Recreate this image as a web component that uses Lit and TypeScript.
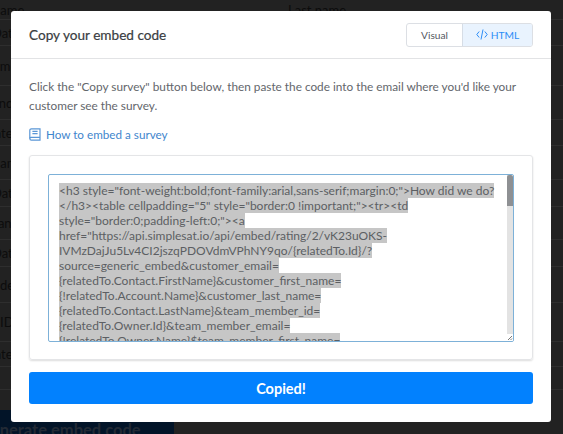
import { LitElement, html, css } from "lit";
import { customElement } from "lit/decorators.js";

const LINES = [
  '<h3 style="font-weight:bold;font-family:arial,sans-serif;margin:0;">How did we do?',
  '</h3><table cellpadding="5" style="border:0 !important;"><tr><td',
  'style="border:0;padding-left:0;"><a',
  'href="https://api.simplesat.io/api/embed/rating/2/vK23uOKS-',
  'IVMzDajJu5Lv4CI2jszqPDOVdmVPhNY9qo/{relatedTo.Id}/?',
  'source=generic_embed&customer_email=',
  '{relatedTo.Contact.FirstName}&customer_first_name=',
  '{!relatedTo.Account.Name}&customer_last_name=',
  '{relatedTo.Contact.LastName}&team_member_id=',
  '{relatedTo.Owner.Id}&team_member_email=',
  '{!relatedTo.Owner.Name}$team_member_first_name=',
];

// label, right-hand label, row height, how far the label starts left of the window
const BG_ROWS: [string, string, number, number][] = [
  ["name", "Last name", 20, 7],
  ["Date", "", 26, 8],
  ["name", "", 40, 14],
  ["Vendor", "", 34, 16],
  ["Date", "", 26, 15],
  ["name", "", 34, 7],
  ["Date", "", 27, 8],
  ["Company", "", 33, 36],
  ["Date", "", 27, 8],
  ["Code", "", 36, 16],
  ["ID", "", 39, 0],
  ["Date", "", 25, 15],
  ["", "", 23, 0],
];

@customElement("app-root")
export class AppRoot extends LitElement {
  static styles = css`
    :host {
      display: block;
      position: relative;
      width: 563px;
      height: 434px;
      overflow: hidden;
      background: #222;
      font-family: Lato, "Open Sans", sans-serif;
    }
    .page {
      display: flex;
      flex-direction: column;
      height: 434px;
    }
    .bg-row {
      display: grid;
      grid-template-columns: 288px 1fr;
      align-items: center;
      box-sizing: border-box;
      border-bottom: 1px solid #2e2e2e;
      font-size: 13px;
      line-height: 16px;
      color: #0c0c0c;
      overflow: hidden;
      white-space: nowrap;
    }
    .gen {
      margin-top: auto;
      width: 174px;
      height: 24px;
      background: #021428;
      color: #222a35;
      font-weight: 700;
      font-size: 16.5px;
      line-height: 40px;
      overflow: hidden;
      white-space: nowrap;
      text-indent: -21px;
      flex: none;
    }
    .modal {
      position: absolute;
      left: 11px;
      top: 11px;
      width: 540px;
      height: 411px;
      background: #fff;
      border-radius: 3px;
      display: flex;
      flex-direction: column;
    }
    .head {
      height: 48px;
      box-sizing: border-box;
      flex: none;
      display: flex;
      align-items: center;
      justify-content: space-between;
      padding: 0 18px;
      border-bottom: 1px solid #e2e3e5;
    }
    h2 {
      margin: 0;
      font-size: 13.6px;
      font-weight: 400;
      color: #3a3d42;
      -webkit-text-stroke: 0.2px #3a3d42;
    }
    .toggle {
      display: flex;
      height: 24px;
      box-sizing: border-box;
      border: 1px solid #dcdfe4;
      border-radius: 3px;
      font-size: 10.2px;
      overflow: hidden;
    }
    .toggle div {
      display: flex;
      align-items: center;
      justify-content: center;
      gap: 3px;
    }
    .visual {
      width: 55px;
      color: #55595f;
    }
    .html {
      width: 70px;
      box-sizing: border-box;
      color: #2b8cf7;
      background: #e9f3fe;
      border-left: 1px solid #d6dde6;
    }
    .body {
      flex: 1;
      display: flex;
      flex-direction: column;
      padding: 18px;
      min-height: 0;
    }
    p {
      margin: 0;
      font-size: 11.8px;
      line-height: 19px;
      color: #63666b;
    }
    .how {
      display: flex;
      align-items: center;
      gap: 5px;
      margin-top: 10px;
      font-size: 11.7px;
      line-height: 18px;
      color: #3f86cd;
    }
    .card {
      margin-top: 12px;
      height: 205px;
      box-sizing: border-box;
      border: 1px solid #e4e5e7;
      border-radius: 3px;
      box-shadow: 0 1px 2px rgba(0, 0, 0, 0.14);
      padding: 18px 18px 17px 18px;
      flex: none;
    }
    .code {
      position: relative;
      height: 100%;
      box-sizing: border-box;
      border: 1px solid #7db1d8;
      border-radius: 2px;
      overflow: hidden;
      display: flex;
    }
    .text {
      flex: 1;
      padding: 8px 10px;
      min-width: 0;
      font-size: 12px;
      line-height: 15px;
      color: #5c5f63;
      white-space: nowrap;
      overflow: hidden;
    }
    .text div {
      height: 15px;
    }
    .text span {
      background: #c6c6c6;
    }
    .track {
      width: 6px;
      flex: none;
      background: #e3e3e3;
    }
    .thumb {
      height: 31px;
      background: #8e9093;
      border-radius: 2px 2px 0 0;
    }
    .resizer {
      position: absolute;
      right: 0;
      bottom: 0;
      width: 7px;
      height: 7px;
      background: #fff;
    }
    .btn {
      margin-top: 12px;
      height: 32px;
      flex: none;
      background: #0281fe;
      border-radius: 3px;
      color: #fff;
      font-weight: 700;
      font-size: 14.5px;
      display: flex;
      align-items: center;
      justify-content: center;
    }
    svg {
      display: block;
    }
  `;

  render() {
    return html`
      <div class="page">
        ${BG_ROWS.map(
          ([l, r, h, off]) => html`<div class="bg-row" style="height:${h}px"><span style="margin-left:${-off}px">${l}</span><span>${r}</span></div>`
        )}
        <div class="gen">Generate embed code</div>
      </div>
      <div class="modal">
        <div class="head">
          <h2>Copy your embed code</h2>
          <div class="toggle">
            <div class="visual">Visual</div>
            <div class="html">
              <svg width="12" height="11" viewBox="0 0 12 11" fill="none" stroke="#2b8cf7" stroke-width="1">
                <path d="M3.2 2.5 L0.8 5.5 L3.2 8.5" />
                <path d="M8.8 2.5 L11.2 5.5 L8.8 8.5" />
                <path d="M7 0.5 L5 10.5" />
              </svg>
              HTML
            </div>
          </div>
        </div>
        <div class="body">
          <p>Click the "Copy survey" button below, then paste the code into the email where you'd like your customer see the survey.</p>
          <div class="how">
            <svg width="12" height="13" viewBox="0 0 12 13" fill="none" stroke="#5b97d6" stroke-width="1.2">
              <path d="M2.4 0.8 H11 V12.2 H2.4 A1.6 1.6 0 0 1 0.8 10.6 V2.4 A1.6 1.6 0 0 1 2.4 0.8 Z" />
              <path d="M0.8 10.4 A1.4 1.4 0 0 1 2.4 9.4 H11" />
              <path d="M3.4 3.4 H8.6 M3.4 5.6 H8.6" />
            </svg>
            How to embed a survey
          </div>
          <div class="card">
            <div class="code">
              <div class="text">${LINES.map((t) => html`<div><span>${t}</span></div>`)}</div>
              <div class="track"><div class="thumb"></div></div>
              <div class="resizer">
                <svg width="7" height="7" viewBox="0 0 7 7" stroke="#555" stroke-width="0.8">
                  <path d="M2 6 L6 2 M4.5 6 L6 4.5" />
                </svg>
              </div>
            </div>
          </div>
          <div class="btn">Copied!</div>
        </div>
      </div>
    `;
  }
}
